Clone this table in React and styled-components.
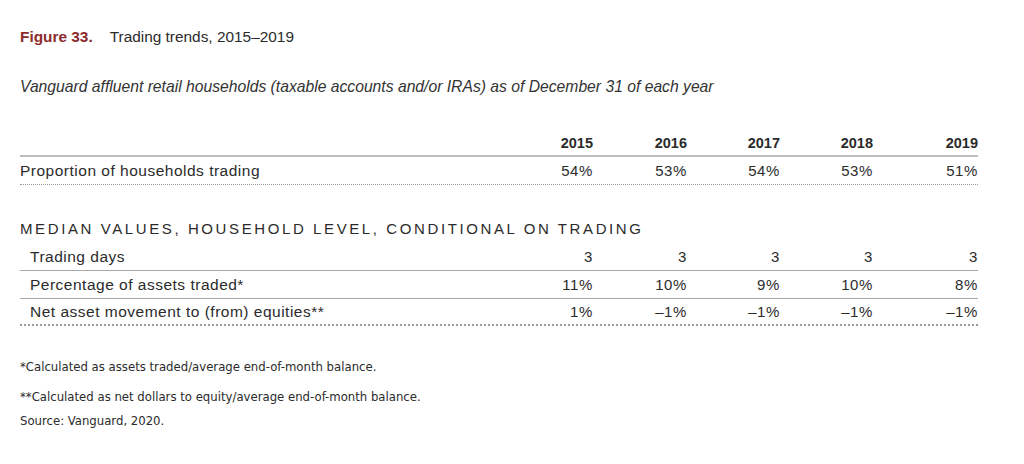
import React from 'react';
import styled, { createGlobalStyle } from 'styled-components';

const GlobalStyle = createGlobalStyle`
  body {
    margin: 0;
    background: #ffffff;
    color: #2b2b2b;
    font-family: "Liberation Sans", Arial, sans-serif;
  }
`;

const Page = styled.div`
  width: 1024px;
  height: 464px;
  box-sizing: border-box;
  padding: 28px 46px 0 20px;
`;

const Title = styled.h1`
  margin: 0;
  font-size: 15.4px;
  font-weight: normal;
  line-height: 18px;
  color: #2b2b2b;
`;

const FigureLabel = styled.span`
  color: #8c2a2c;
  font-weight: bold;
  margin-right: 17px;
`;

const Subtitle = styled.p`
  margin: 32px 0 0;
  font-size: 15.7px;
  font-style: italic;
  line-height: 18px;
  color: #333;
`;

const Table = styled.div`
  margin-top: 35px;
`;

const Row = styled.div`
  display: grid;
  grid-template-columns: 479px 94px 94px 93px 93px 105px;
  align-items: center;
  height: ${p => p.$h || 28}px;
  box-sizing: border-box;
  border-bottom: ${p => p.$border || 'none'};
`;

const Label = styled.div`
  font-size: 15.5px;
  letter-spacing: 0.5px;
  color: #2b2b2b;
  padding-left: ${p => (p.$indent ? 10 : 0)}px;
`;

const Cell = styled.div`
  text-align: right;
  font-size: ${p => (p.$bold ? 14.5 : 15)}px;
  letter-spacing: ${p => (p.$bold ? 0 : 0.6)}px;
  color: #2b2b2b;
  font-weight: ${p => (p.$bold ? 'bold' : 'normal')};
`;

const Section = styled.h2`
  margin: 35px 0 5px;
  font-size: 15px;
  font-weight: normal;
  letter-spacing: 2.6px;
  line-height: 18px;
  color: #2b2b2b;
`;

const Notes = styled.div`
  margin-top: 32px;
  font-family: "Liberation Sans Narrow", "DejaVu Sans Condensed", sans-serif;
  font-size: 13px;
  color: #2b2b2b;
`;

const Note = styled.p`
  margin: 0 0 ${p => p.$gap || 0}px;
  line-height: 18px;
`;

const years = ['2015', '2016', '2017', '2018', '2019'];

const median = [
  { label: 'Trading days', values: ['3', '3', '3', '3', '3'], border: '1px solid #a8a8a8' },
  { label: 'Percentage of assets traded*', values: ['11%', '10%', '9%', '10%', '8%'], border: '1px solid #a8a8a8' },
  { label: 'Net asset movement to (from) equities**', values: ['1%', '–1%', '–1%', '–1%', '–1%'], border: '2px dotted #9a9a9a', h: 27 },
];

export default function App() {
  return (
    <Page>
      <GlobalStyle />
      <Title>
        <FigureLabel>Figure 33.</FigureLabel>
        Trading trends, 2015–2019
      </Title>
      <Subtitle>
        Vanguard affluent retail households (taxable accounts and/or IRAs) as of December 31 of each year
      </Subtitle>

      <Table>
        <Row $h={26} $border="2px solid #bdbdbd">
          <Label />
          {years.map(y => (
            <Cell key={y} $bold>{y}</Cell>
          ))}
        </Row>
        <Row $border="1px dotted #9a9a9a">
          <Label>Proportion of households trading</Label>
          {['54%', '53%', '54%', '53%', '51%'].map((v, i) => (
            <Cell key={i}>{v}</Cell>
          ))}
        </Row>

        <Section>MEDIAN VALUES, HOUSEHOLD LEVEL, CONDITIONAL ON TRADING</Section>
        {median.map(row => (
          <Row key={row.label} $h={row.h} $border={row.border}>
            <Label $indent>{row.label}</Label>
            {row.values.map((v, i) => (
              <Cell key={i}>{v}</Cell>
            ))}
          </Row>
        ))}
      </Table>

      <Notes>
        <Note $gap={12}>*Calculated as assets traded/average end-of-month balance.</Note>
        <Note $gap={6}>**Calculated as net dollars to equity/average end-of-month balance.</Note>
        <Note>Source: Vanguard, 2020.</Note>
      </Notes>
    </Page>
  );
}
